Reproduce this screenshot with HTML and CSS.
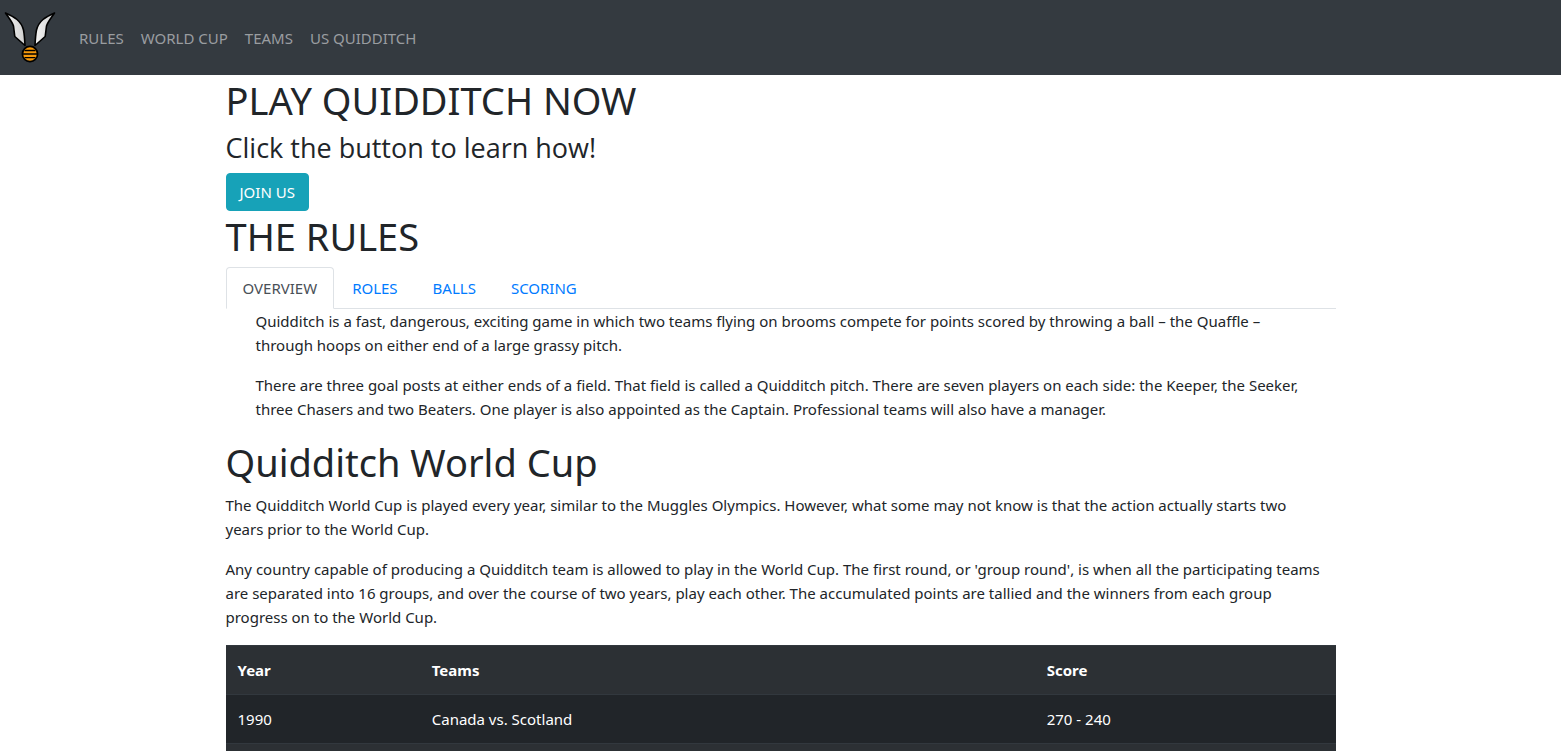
FILE: index.html
```html
<!DOCTYPE html>
<html lang="en">
<head>
<meta charset="utf-8">
<meta name="viewport" content="width=device-width, initial-scale=1">
<title>Quidditch</title>
<link rel="stylesheet" href="styles.css">
</head>
<body>
<nav class="navbar">
  <a class="brand" href="#" aria-label="Home">
    <svg class="logo" viewBox="0 0 60 60" aria-hidden="true">
      <defs>
        <linearGradient id="wing" x1="0" y1="0" x2="1" y2="0">
          <stop offset="0" stop-color="#f4f4f4"/>
          <stop offset="1" stop-color="#cfcfcf"/>
        </linearGradient>
      </defs>
      <g fill="url(#wing)" stroke="#000" stroke-width="1.6" stroke-linejoin="round">
        <path d="M5.500 5C10 7 14 9 17 11.500C20.500 14.500 22.500 18 23.500 22C24.500 27 24.700 32 25 37.500L14.800 28.500L13.500 18C12 13.500 8.500 9.500 5.500 5Z"/>
        <path d="M54.500 5C50 7 46 9 43 11.500C39.500 14.500 37.500 18 36.500 22C35.500 27 35.300 32 35 37.500L45.200 28.500L46.500 18C48 13.500 51.500 9.500 54.500 5Z"/>
      </g>
      <circle cx="30" cy="46" r="7.600" fill="#f79a0c" stroke="#000" stroke-width="1.700"/>
      <path d="M24.500 42.500H35.500M23 46H37M24.500 49.600H35.500" stroke="#000" stroke-width="1.400"/>
    </svg>
  </a>
  <ul class="nav-links">
    <li><a href="#rules">RULES</a></li>
    <li><a href="#cup">WORLD CUP</a></li>
    <li><a href="#teams">TEAMS</a></li>
    <li><a href="#us">US QUIDDITCH</a></li>
  </ul>
</nav>
<main class="container">
  <section>
    <h1>PLAY QUIDDITCH NOW</h1>
    <h3>Click the button to learn how!</h3>
    <button class="btn" type="button">JOIN US</button>
  </section>
  <section id="rules">
    <h1>THE RULES</h1>
    <ul class="tabs">
      <li><a class="tab active" href="#overview">OVERVIEW</a></li>
      <li><a class="tab" href="#roles">ROLES</a></li>
      <li><a class="tab" href="#balls">BALLS</a></li>
      <li><a class="tab" href="#scoring">SCORING</a></li>
    </ul>
    <div class="tab-content" id="overview">
      <p>Quidditch is a fast, dangerous, exciting game in which two teams flying on brooms compete for points scored by throwing a ball – the Quaffle – through hoops on either end of a large grassy pitch.</p>
      <p>There are three goal posts at either ends of a field. That field is called a Quidditch pitch. There are seven players on each side: the Keeper, the Seeker, three Chasers and two Beaters. One player is also appointed as the Captain. Professional teams will also have a manager.</p>
    </div>
  </section>
  <section class="cup" id="cup">
    <h1>Quidditch World Cup</h1>
    <p>The Quidditch World Cup is played every year, similar to the Muggles Olympics. However, what some may not know is that the action actually starts two years prior to the World Cup.</p>
    <p>Any country capable of producing a Quidditch team is allowed to play in the World Cup. The first round, or 'group round', is when all the participating teams are separated into 16 groups, and over the course of two years, play each other. The accumulated points are tallied and the winners from each group progress on to the World Cup.</p>
    <table class="scores">
      <colgroup><col class="col-year"><col class="col-teams"><col></colgroup>
      <thead><tr><th scope="col">Year</th><th scope="col">Teams</th><th scope="col">Score</th></tr></thead>
      <tbody>
        <tr><td>1990</td><td>Canada vs. Scotland</td><td>270 - 240</td></tr>
        <tr><td></td><td></td><td></td></tr>
      </tbody>
    </table>
  </section>
</main>
</body>
</html>
```
FILE: styles.css
```css
*, *::before, *::after { box-sizing: border-box; }
body {
  margin: 0;
  background: #fff;
  color: #212529;
  font-family: "Noto Sans", "Open Sans", sans-serif;
  font-size: 15px;
  line-height: 24px;
}
a { color: #007bff; text-decoration: none; }
ul { list-style: none; margin: 0; padding: 0; }
h1, h3 { margin: 0 0 8px; font-weight: 400; }
h1 { font-size: 38px; line-height: 48px; padding-top: 1px; margin-bottom: 7px; }
h3 { font-family: "Open Sans", "Noto Sans", sans-serif; font-size: 27px; line-height: 34px; }
p { margin: 0 0 16px; }
.cup p { padding-right: 12px; }
.navbar {
  display: flex;
  align-items: center;
  gap: 11px;
  min-height: 75px;
  background: #343a40;
}
.brand, .logo { display: block; }
.logo { width: 60px; height: 60px; }
.nav-links { display: flex; gap: 1px; }
.nav-links a { display: block; padding: 8px; color: #9a9da0; }
.container { max-width: 1140px; margin: 0 auto; padding: 0 15px; }
.btn {
  display: block;
  padding: 6px 13px;
  border: 1px solid #17a2b8;
  border-radius: 4px;
  background: #17a2b8;
  color: #fff;
  font: inherit;
}
.tabs { display: flex; gap: 1px; border-bottom: 1px solid #dee2e6; }
.tab {
  display: block;
  margin-bottom: -1px;
  padding: 8px 16px;
  border: 1px solid transparent;
  border-radius: 4px 4px 0 0;
}
.tab.active {
  border-color: #dee2e6 #dee2e6 #fff;
  background: #fff;
  color: #495057;
}
.tab-content { padding: 0 30px; }
.scores {
  width: 100%;
  table-layout: fixed;
  border-spacing: 0;
  background: #212529;
  color: #fff;
}
.col-year { width: 17.5%; }
.col-teams { width: 55.4%; }
.scores th, .scores td {
  height: 49px;
  padding: 12px;
  border-top: 1px solid #32383e;
  text-align: left;
}
.scores th { background: #2c3034; font-weight: 700; }
.scores tbody tr:nth-child(even) { background: #2c3034; }
```
